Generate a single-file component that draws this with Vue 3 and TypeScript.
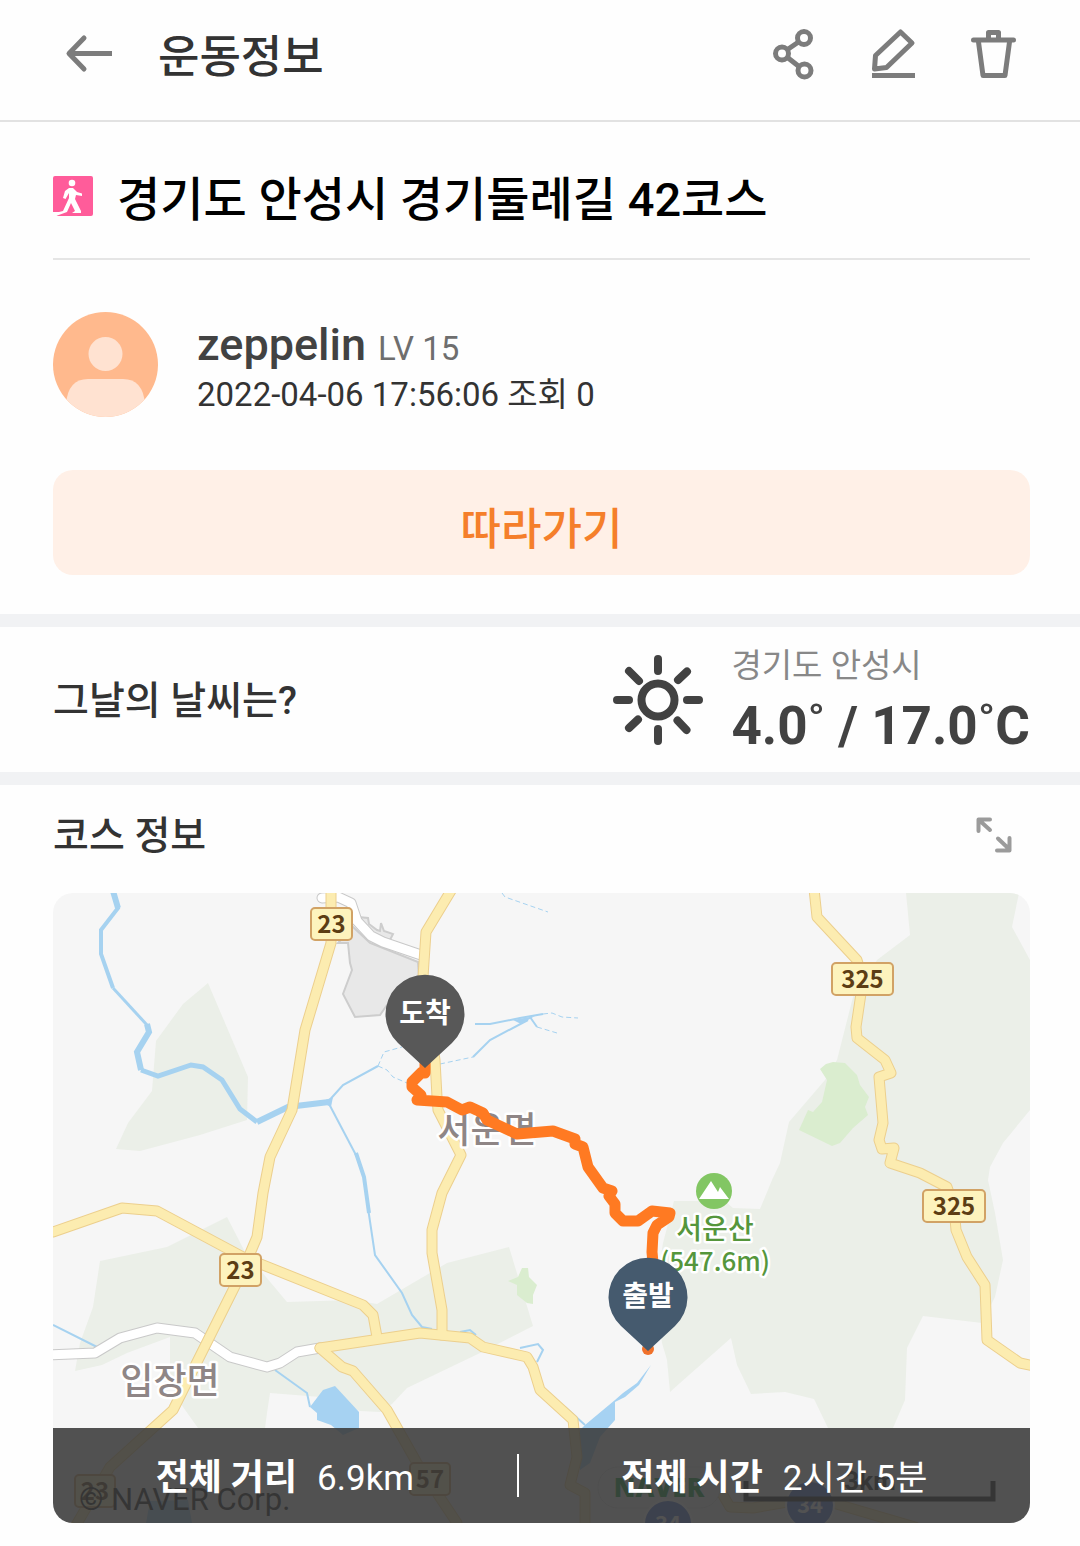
<script setup lang="ts">
interface Badge {
  x: number
  y: number
  width: number
  label: string
}

interface Pin {
  x: number
  y: number
  label: string
  color: string
}

interface Stat {
  label: string
  value: string
}

const badges: Badge[] = [
  { x: 258, y: 15, width: 41, label: '23' },
  { x: 779, y: 70, width: 61, label: '325' },
  { x: 167, y: 361, width: 41, label: '23' },
  { x: 870, y: 297, width: 62, label: '325' },
  { x: 22, y: 582, width: 40, label: '23' },
  { x: 357, y: 570, width: 40, label: '57' },
]

const pins: Pin[] = [
  { x: 372, y: 121, label: '도착', color: '#585858' },
  { x: 595, y: 404, label: '출발', color: '#455a6e' },
]

const yellowRoads: string[] = [
  'M0 339 69 315 104 318 190 364 310 412 320 422 324 444',
  'M267 455 289 474 300 478 334 517 364 570 404 630',
  'M399 -4 373 39 370 84 382 167 384 204 385 217 408 262 389 300 379 337 379 360 389 417 389 442',
  'M267 455 367 440 417 445 430 454 474 464 480 474 487 497 520 527 524 564 517 592 532 600 532 634',
  'M278 -4 278 50 252 137 239 217 217 264 210 300 204 344 190 377 120 517 57 574 22 634',
  'M761 -4 764 24 804 67 810 87 803 134 804 145 832 167 838 180 826 184 830 230 826 247 829 256 841 255 837 270 867 280 894 294 901 314 903 337 914 364 932 392 934 447 967 470 981 473',
  'M667 597 677 614 700 615 734 609 780 610 862 634',
]

const whiteRoads: string[] = [
  'M269 5 285 4 298 10 304 28 318 43 330 49 368 62',
  'M-4 462 42 460 67 445 104 435 142 440 177 464 214 474 227 470 244 459 267 455',
]

const stats: Stat[] = [
  { label: '전체 거리', value: '6.9km' },
  { label: '전체 시간', value: '2시간 5분' },
]
</script>

<template>
  <div class="page">
    <header class="topbar">
      <button class="icon-button" type="button" aria-label="뒤로">
        <svg viewBox="0 0 52 52" fill="none" stroke="#7c7c7c" stroke-width="5">
          <path d="M22 10 7 25.500 22 41" stroke-linecap="round" stroke-linejoin="round" />
          <path d="M7 25.500H50" />
        </svg>
      </button>
      <h1 class="topbar-title">운동정보</h1>
      <div class="actions">
        <button class="icon-button" type="button" aria-label="공유">
          <svg viewBox="0 0 52 52" fill="none" stroke="#7c7c7c" stroke-width="5">
            <circle cx="36" cy="10" r="6.500" />
            <circle cx="14" cy="25.500" r="6.500" />
            <circle cx="36.500" cy="42.500" r="6.500" />
            <path d="M19.500 21.500 30.500 14M19.500 29.500 31 38.500" />
          </svg>
        </button>
        <button class="icon-button" type="button" aria-label="수정">
          <svg viewBox="0 0 52 52" fill="none" stroke="#7c7c7c" stroke-width="5" stroke-linejoin="round">
            <path d="M32.500 4 44 15 18.500 39.500 6.500 41 7.500 27.500Z" />
            <path d="M4 47.500H47" />
          </svg>
        </button>
        <button class="icon-button" type="button" aria-label="삭제">
          <svg viewBox="0 0 52 52" fill="none" stroke="#7c7c7c" stroke-width="5" stroke-linejoin="round" stroke-linecap="round">
            <path d="M5.500 12H45.500M10.500 14 15 47.500H37L41.500 14M20.500 11V4.500H30.500V11" />
          </svg>
        </button>
      </div>
    </header>

    <main>
      <section class="intro">
        <div class="course-title">
          <svg class="walk" viewBox="0 0 40 40" aria-hidden="true">
            <path d="M2 0H38Q40 0 40 2V38Q40 40 38 40H3L9 36H0V2Q0 0 2 0Z" fill="#ff5c9a" />
            <circle cx="19" cy="7" r="3.300" fill="#fff" />
            <path d="M16 12H20L24 16 29 17.500V20L23 19 22 23 28 35V37H19L22 35 18 27 14 36 3 40 2 37 10 35 16 22V17L12.500 23 10 22 12 15Z" fill="#fff" />
          </svg>
          <h2>경기도 안성시 경기둘레길 42코스</h2>
        </div>

        <div class="profile">
          <svg class="avatar" viewBox="0 0 105 105" aria-hidden="true">
            <defs>
              <clipPath id="avatar-clip"><circle cx="52.500" cy="52.500" r="52.500" /></clipPath>
            </defs>
            <g clip-path="url(#avatar-clip)">
              <rect width="105" height="105" fill="#ffb98d" />
              <circle cx="52.500" cy="42" r="17" fill="#ffe2d1" />
              <path d="M13 105V92Q15 67 35 67H70Q90 67 92 92V105Z" fill="#ffe2d1" />
            </g>
          </svg>
          <div class="profile-text">
            <p class="user"><span class="name">zeppelin</span><span class="level">LV 15</span></p>
            <p class="meta">2022-04-06 17:56:06 조회 0</p>
          </div>
        </div>

        <button class="follow" type="button">따라가기</button>
      </section>

      <section class="weather">
        <h3>그날의 날씨는?</h3>
        <svg class="sun" viewBox="-45 -45 90 90" fill="none" stroke="#424242" stroke-width="8" stroke-linecap="round" aria-hidden="true">
          <circle r="16.500" />
          <path d="M0-41V-29M0 29V41M-41 0H-29M29 0H41M-29-29-19-19M29-28.500 20-20M-29 28-20 19.500M28.500 30 19.500 20.500" />
        </svg>
        <div>
          <p class="place">경기도 안성시</p>
          <p class="temperature">4.0˚ / 17.0˚C</p>
        </div>
      </section>

      <section class="course">
        <div class="course-head">
          <h3>코스 정보</h3>
          <button class="expand" type="button" aria-label="지도 확대">
            <svg viewBox="0 0 36 36" fill="none" stroke="#9b9b9b" stroke-width="4" stroke-linecap="round" stroke-linejoin="round">
              <path d="M2.500 14V2.500H14M3 3 14 13M22 21.500 33 32M33.500 21V33.500H21" />
            </svg>
          </button>
        </div>

        <div class="map">
          <svg class="map-canvas" viewBox="0 0 977 630" preserveAspectRatio="xMidYMid slice" role="img" aria-label="코스 지도">
            <rect width="977" height="630" fill="#f6f6f6" />
            <g fill="#ebefe8">
              <path d="M155 90 195 184 194 227 147 242 87 258 63 256 75 230 99 198 103 148 130 111Z" />
              <path d="M47 368 114 354 174 324 192 359 234 409 300 407 324 411 394 370 456 354 480 433 427 460 354 495 339 511 327 519 307 518 280 505 217 500 214 520 212 535 145 535 130 514 117 490 117 444 74 460 49 472 22 478 27 450 40 414Z" />
              <path d="M853 0 857 42 824 67 800 104 784 167 772 187 736 229 727 270 719 287 707 316 680 315 672 308 621 308 610 350 602 400 609 450 614 467 617 499 627 490 678 445 684 472 698 501 732 499 761 506 775 535 840 535 852 507 854 455 870 423 929 430 942 404 950 367 942 320 935 287 937 274 950 250 977 217V67L959 34 966 0Z" />
            </g>
            <g fill="#daedcf">
              <path d="M767 176 773 171 780 169 792 170 799 177 804 182 807 192 816 204 812 214 815 222 800 235 787 250 779 253 746 237 755 217 760 219 769 209 774 187Z" />
              <path d="M455 388 465 384 469 375 475 375 476 384 484 392 480 402 480 411 474 410 464 402 464 392Z" />
            </g>
            <g fill="#e8e8e8" stroke="#cdcdcd" stroke-width="2">
              <path d="M285 50H295L297 70 299 77 290 101 302 124 327 122 334 112 367 100 365 69 317 50 300 34Z" />
              <path d="M305 24 315 25 316 31 324 37 327 38 328 30 331 38 340 41 337 47 317 45Z" />
            </g>

            <g fill="none" stroke="#a6d2f0" stroke-width="4">
              <path d="M60-2 65 15 48 37V61L60 95" />
              <path d="M60 95 94 132" stroke-width="3" />
              <path d="M60-2 65 15M94 131 96 139 84 159 88 177M204 229 235 214 276 209" stroke-width="6" />
              <path d="M88 177 105 183 138 172 150 174 169 187 187 216 204 229" stroke-width="5" />
              <path d="M273 211 290 192 325 173" stroke-width="2" />
              <path d="M325 173 331 159 349 154M325 173 334 177 340 184 354 190M449 0 452 4 495 19M387 171 420 164M490 121 499 120 509 124 525 125M484 134 504 140" stroke-width="1" stroke-dasharray="5 3" />
              <path d="M275 209 304 264" stroke-width="2" />
              <path d="M303 260 311 284 316 320" stroke-width="4" />
              <path d="M315 315 322 362 349 400 359 422 369 434 379 436M0 432 44 454M222 477 254 500 257 514M420 164 437 147 475 127M422 131 437 131 467 125 490 121M477 124 484 134M467 455 485 451 490 457 484 469M407 439 417 437 423 442M512 514 532 532" stroke-width="2" />
            </g>
            <g fill="#a6d2f2">
              <path d="M268 209 280 204 278 214Z" />
              <path d="M460 127 482 123 468 131Z" />
              <path d="M282 493 306 519V535L290 542 278 532 264 527V520L257 514 270 497Z" />
              <path d="M598 472 584 490 570 500 562 507 532 532 527 537V577L537 570 547 544 562 527V509L572 504 586 492Z" />
              <path d="M93 630 97 608 135 607 139 630Z" />
            </g>

            <g fill="none" stroke-linejoin="round">
              <g stroke="#c9c9c9" stroke-width="11" stroke-linecap="round">
                <path v-for="road in whiteRoads" :key="road" :d="road" />
              </g>
              <g stroke="#fff" stroke-width="9" stroke-linecap="round">
                <path v-for="road in whiteRoads" :key="road" :d="road" />
              </g>
              <g stroke="#eccf8d" stroke-width="11" stroke-linecap="round">
                <path v-for="road in yellowRoads" :key="road" :d="road" />
              </g>
              <g stroke="#fcecb0" stroke-width="9" stroke-linecap="round">
                <path v-for="road in yellowRoads" :key="road" :d="road" />
              </g>
            </g>

            <g class="road-badge">
              <g v-for="badge in badges" :key="`${badge.x}-${badge.y}`">
                <rect :x="badge.x" :y="badge.y" :width="badge.width" height="32" rx="4" fill="#fdf3bd" stroke="#d1a265" stroke-width="2" />
                <text :x="badge.x + badge.width / 2" :y="badge.y + 25">{{ badge.label }}</text>
              </g>
            </g>

            <g>
              <circle cx="661" cy="298" r="18" fill="#82c663" />
              <path d="M646 306 658 288 665 299 667 294 676 306Z" fill="#fff" />
            </g>
            <g class="town">
              <text x="434" y="250">서운면</text>
              <text x="117" y="501">입장면</text>
            </g>
            <g class="peak">
              <text x="662" y="346">서운산</text>
              <text class="height" x="662" y="378">(547.6m)</text>
            </g>

            <text class="copyright" x="26" y="617">© NAVER Corp.</text>
            <rect x="545" y="574" width="122" height="41" rx="20" fill="#f6f6f6" stroke="#ddd" />
            <text class="brand" x="606" y="604">NAVER</text>
            <g class="shield">
              <circle cx="757" cy="612" r="24" />
              <text x="757" y="620">34</text>
              <circle cx="615" cy="631" r="24" />
              <text x="615" y="639">34</text>
            </g>
            <path d="M693 588V606H940V588" fill="none" stroke="#111" stroke-width="5" />
            <text class="scale" x="817" y="597">3km</text>

            <circle cx="595" cy="456" r="6" fill="#f0712a" />
            <path d="M372 170 372 180 369 179 359 189 359 194 368 202 364 207 394 209 409 217 417 214 430 220 434 227 464 241 500 238 522 246 522 251 530 254 535 274 550 295 559 298 556 303 562 311 562 320 570 328 585 328 599 318 617 320 616 324 604 332 600 340 599 359 600 370" fill="none" stroke="#ff7a22" stroke-width="11" stroke-linejoin="round" stroke-linecap="round" />
            <g v-for="pin in pins" :key="pin.label" class="pin">
              <path :transform="`translate(${pin.x} ${pin.y})`" d="M0 54-27 29A39.500 39.500 0 1 1 27 29Z" :fill="pin.color" />
              <text :x="pin.x" :y="pin.y + 9">{{ pin.label }}</text>
            </g>
          </svg>

          <dl class="stats">
            <div v-for="stat in stats" :key="stat.label" class="stat">
              <dt>{{ stat.label }}</dt>
              <dd>{{ stat.value }}</dd>
            </div>
          </dl>
        </div>
      </section>
    </main>
  </div>
</template>

<style>
body {
  margin: 0;
  background: #fefefe;
}
</style>

<style scoped>
.page {
  font-family: Roboto, 'Noto Sans CJK KR', sans-serif;
  color: #333;
}

h1,
h2,
h3,
p,
dl,
dd {
  margin: 0;
}

h1,
h2,
h3 {
  font-weight: 500;
}

button {
  margin: 0;
  padding: 0;
  border: 0;
  background: none;
  font-family: inherit;
  cursor: pointer;
}

svg {
  display: block;
}

.topbar {
  display: flex;
  align-items: center;
  padding: 28px 60px 40px 62px;
  border-bottom: 2px solid #e2e2e2;
}

.icon-button,
.icon-button svg {
  width: 52px;
  height: 52px;
}

.topbar-title {
  margin-left: 44px;
  padding-top: 8px;
  font-size: 45px;
  line-height: 44px;
}

.actions {
  display: flex;
  gap: 48px;
  margin-left: auto;
}

.intro {
  padding: 0 50px 39px 53px;
}

.course-title {
  display: flex;
  align-items: center;
  gap: 24px;
  padding: 42px 0 30px;
  border-bottom: 2px solid #e5e5e5;
}

.walk {
  flex: none;
  width: 40px;
  height: 40px;
}

.course-title h2 {
  padding-top: 8px;
  color: #000;
  font-size: 47px;
  line-height: 56px;
}

.profile {
  display: flex;
  align-items: center;
  gap: 39px;
  padding: 52px 0 53px;
}

.avatar {
  flex: none;
  width: 105px;
  height: 105px;
}

.profile-text {
  padding-top: 8px;
}

.user {
  display: flex;
  align-items: baseline;
  gap: 12px;
  line-height: 48px;
}

.name {
  color: #424242;
  font-size: 45px;
  font-weight: 500;
}

.level {
  color: #6e6e6e;
  font-size: 33px;
}

.meta {
  font-size: 33px;
  line-height: 44px;
}

.follow {
  display: block;
  width: 100%;
  padding-top: 16px;
  border-radius: 20px;
  background: #fff0e7;
  color: #f57f2b;
  font-size: 44px;
  font-weight: 500;
  line-height: 89px;
}

.weather {
  display: flex;
  align-items: center;
  padding: 12px 50px 12px 53px;
  border-top: 13px solid #f1f2f4;
  border-bottom: 13px solid #f1f2f4;
}

.weather h3,
.course h3 {
  padding-top: 2px;
  font-size: 39px;
  line-height: 58px;
}

.sun {
  flex: none;
  width: 90px;
  height: 90px;
  margin: 0 28px 0 auto;
}

.place {
  color: #888;
  font-size: 33px;
  line-height: 53px;
}

.temperature {
  color: #424242;
  font-size: 53px;
  font-weight: 700;
  line-height: 68px;
}

.course {
  padding: 0 50px 23px 53px;
}

.course-head {
  display: flex;
  align-items: center;
  justify-content: space-between;
  padding: 20px 18px 28px 0;
}

.expand,
.expand svg {
  width: 36px;
  height: 36px;
}

.map {
  position: relative;
  overflow: hidden;
  border-radius: 20px;
}

.map-canvas {
  width: 100%;
  height: auto;
}

.map-canvas text {
  font-family: 'Noto Sans CJK KR', sans-serif;
  font-weight: 500;
  text-anchor: middle;
}

.map-canvas .road-badge text {
  fill: #5c3d14;
  font-size: 24px;
  font-weight: 700;
}

.town text,
.peak text {
  paint-order: stroke;
  stroke: #fff;
  stroke-linejoin: round;
  stroke-width: 5px;
}

.town text {
  fill: #8f8686;
  font-size: 36px;
}

.peak text {
  fill: #55963c;
  font-size: 28px;
}

.peak .height {
  font-size: 26px;
}

.map-canvas .copyright {
  fill: #111;
  font-family: Roboto, sans-serif;
  font-size: 31px;
  font-weight: 400;
  text-anchor: start;
}

.map-canvas .brand {
  fill: #0a9a30;
  font-family: 'Open Sans', sans-serif;
  font-size: 26px;
  font-weight: 800;
}

.shield circle {
  fill: #4f74d4;
  stroke: #fff;
  stroke-width: 2px;
}

.map-canvas .shield text {
  fill: #fff;
  font-size: 22px;
  font-weight: 700;
}

.map-canvas .scale {
  fill: #111;
  font-family: Roboto, sans-serif;
  font-size: 26px;
  font-weight: 700;
}

.map-canvas .pin text {
  fill: #fff;
  font-size: 28px;
  font-weight: 700;
}

.stats {
  position: absolute;
  right: 0;
  bottom: 0;
  left: 0;
  display: flex;
  align-items: center;
  height: 95px;
  background: rgba(58, 58, 58, 0.88);
  color: #fff;
}

.stat {
  display: flex;
  flex: 1 1 auto;
  align-items: baseline;
  justify-content: center;
  gap: 20px;
  padding-top: 6px;
  line-height: 36px;
}

.stat + .stat {
  border-left: 2px solid #fff;
}

.stat dt {
  font-size: 36px;
  font-weight: 700;
}

.stat dd {
  font-size: 35px;
}
</style>
